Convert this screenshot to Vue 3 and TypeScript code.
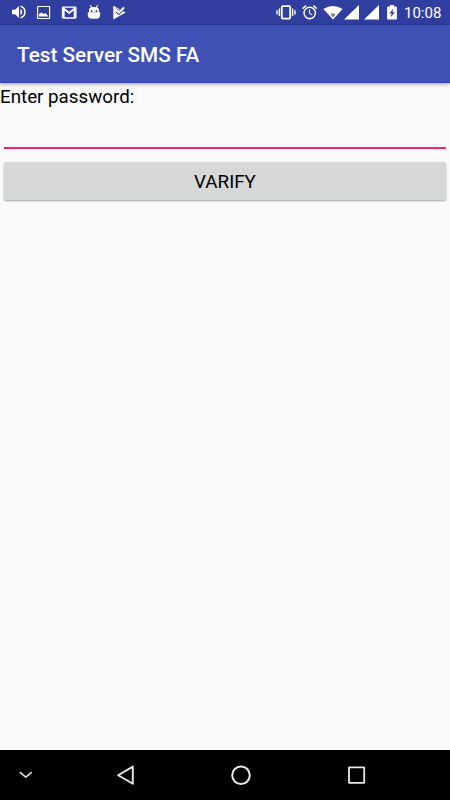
<script setup lang="ts">
import { ref } from 'vue'

const title = 'Test Server SMS FA'
const password = ref('')
const time = '10:08'
</script>

<template>
  <div class="screen">
    <header class="status">
      <div class="group left">
        <!-- volume -->
        <svg width="16" height="16" viewBox="0 0 16 16">
          <path d="M1 5.7h3L8 2v12L4 10.3H1z" fill="#fff" />
          <path d="M9.4 4.9a3.5 3.5 0 0 1 0 6.2z" fill="#fff" />
          <path d="M9.5 2.2a6 6 0 0 1 0 11.6" fill="none" stroke="#fff" stroke-width="1.5" />
        </svg>
        <!-- picture -->
        <svg width="16" height="16" viewBox="0 0 16 16">
          <rect x="1.6" y="2.5" width="12" height="12" rx=".6" fill="none" stroke="#fff" stroke-width="1.2" />
          <path d="M3 12.4V9.9L5.5 8.4l2.2 1.6 1.6-1.1 3.3 3.5z" fill="#fff" />
        </svg>
        <!-- mail -->
        <svg width="16" height="16" viewBox="0 0 16 16">
          <rect x="1.5" y="3.2" width="13.4" height="10.8" rx=".8" fill="none" stroke="#fff" stroke-width="1.3" />
          <path d="M2.7 14V4.4l5.5 4.5 5.5-4.5V14" fill="none" stroke="#fff" stroke-width="1.9" />
        </svg>
        <!-- android bot -->
        <svg width="16" height="16" viewBox="0 0 16 16">
          <path d="M4.2 1.2l1.6 2.4M11.8 1.2l-1.6 2.4" stroke="#fff" stroke-width="1.1" />
          <path d="M3 8V6Q3 2.9 8 2.9T13 6v2z" fill="#fff" />
          <path d="M1.8 8.3h12.4v2.5q0 4-4.2 4H6q-4.2 0-4.2-4z" fill="#fff" />
          <circle cx="5.6" cy="7" r=".9" fill="#303f9f" />
          <circle cx="10.4" cy="7" r=".9" fill="#303f9f" />
        </svg>
        <!-- play check -->
        <svg width="16" height="16" viewBox="0 0 16 16">
          <path d="M2.3 1.7l12.4 6.7-12.4 7z" fill="#fff" />
          <path d="M5 7.7l2.9 2.7 5.2-5.2" fill="none" stroke="#303f9f" stroke-width="1.2" />
          <path d="M5.2 5.8l2.7 2.5 5.2-4.9" fill="none" stroke="#fff" stroke-width="2" />
          <path d="M5.3 4.2l2.6 2.4 1.9-1.8" fill="none" stroke="#303f9f" stroke-width=".9" />
        </svg>
      </div>
      <div class="group right">
        <!-- vibrate -->
        <svg class="vibrate" width="20" height="16" viewBox="0 0 20 16">
          <rect x="5.8" y="2.2" width="8.4" height="12.4" rx="1" fill="none" stroke="#fff" stroke-width="1.8" />
          <path d="M1 6.2v4.2M3.4 4.5v7.6M16.6 4.5v7.6M19 6.2v4.2" stroke="#fff" stroke-width="1.4" />
        </svg>
        <!-- alarm -->
        <svg class="alarm" width="16" height="16" viewBox="0 0 16 16">
          <circle cx="7.7" cy="9" r="5.7" fill="none" stroke="#fff" stroke-width="1.4" />
          <path d="M.6 4.6l3.5-3M14.8 4.6l-3.5-3" stroke="#fff" stroke-width="1.4" />
          <path d="M7.5 5.6v3.7l2.7 1.6" fill="none" stroke="#fff" stroke-width="1.1" />
        </svg>
        <!-- wifi -->
        <svg class="wifi" width="20" height="16" viewBox="0 0 20 16">
          <path d="M.4 5Q10 -1.2 19.6 5L10 15.6z" fill="#fff" />
          <path d="M7.9 9.4h4.2v1.5L10 13.4l-2.1-2.5z" fill="#7e7e86" />
        </svg>
        <!-- signal, one per SIM -->
        <svg class="signal" width="15" height="16" viewBox="0 0 15 16">
          <path d="M0 15.5L15 1v14.5z" fill="#fff" />
        </svg>
        <svg class="signal second" width="15" height="16" viewBox="0 0 15 16">
          <path d="M0 15.5L15 1v14.5z" fill="#fff" />
        </svg>
        <!-- charging battery -->
        <svg class="battery" width="10" height="16" viewBox="0 0 10 16">
          <path d="M3 1h4v1.4h2.2q.7 0 .7.7v11.6q0 .8-.8.8H.9q-.8 0-.8-.8V3.1q0-.7.7-.7H3z" fill="#fff" />
          <path d="M6.5 4.6L2.3 9.5h2.4l-1.2 4 4.4-5.2H5.4z" fill="#303f9f" />
        </svg>
        <span class="time">{{ time }}</span>
      </div>
    </header>

    <div class="appbar">
      <h1>{{ title }}</h1>
    </div>

    <main class="content">
      <label for="password">Enter password:</label>
      <input id="password" v-model="password" type="password" />
      <button type="button">VARIFY</button>
    </main>

    <nav class="navbar">
      <svg class="collapse" width="14" height="8" viewBox="0 0 14 8">
        <path d="M.8 1.2l6 5 6-5" fill="none" stroke="#d8d8d8" stroke-width="1.7" />
      </svg>
      <svg class="back" width="18" height="20" viewBox="0 0 18 20">
        <path d="M1.2 10.2L15.8 1.6v17.2z" fill="none" stroke="#e8e8e8" stroke-width="1.9" stroke-linejoin="round" />
      </svg>
      <svg class="home" width="20" height="20" viewBox="0 0 20 20">
        <circle cx="10" cy="10.2" r="8.8" fill="none" stroke="#e8e8e8" stroke-width="2" />
      </svg>
      <svg class="recent" width="18" height="18" viewBox="0 0 18 18">
        <rect x="1" y="1.4" width="15.2" height="15.4" rx=".3" fill="none" stroke="#e8e8e8" stroke-width="1.8" />
      </svg>
    </nav>
  </div>
</template>

<style>
body {
  margin: 0;
  background: #fafafa;
}
</style>

<style scoped>
.screen {
  width: 450px;
  height: 800px;
  display: flex;
  flex-direction: column;
  overflow: hidden;
  background: #fafafa;
  font-family: Roboto, 'Liberation Sans', sans-serif;
}
svg {
  display: block;
  flex: none;
}
.status {
  height: 25px;
  flex: none;
  display: flex;
  justify-content: space-between;
  background: #303f9f;
  color: #fff;
}
.group {
  display: flex;
  height: 16px;
  padding-top: 4px;
}
.left {
  gap: 9px;
  padding-left: 11px;
}
.alarm {
  margin-left: 6px;
}
.wifi {
  margin-left: 5px;
}
.signal {
  margin-left: 1px;
}
.signal.second {
  margin-left: 5px;
}
.battery {
  margin-left: 8px;
}
.time {
  width: 46px;
  margin-left: 7px;
  font-size: 15px;
  line-height: 18px;
  white-space: nowrap;
}
.appbar {
  height: 58px;
  flex: none;
  display: flex;
  align-items: center;
  box-sizing: border-box;
  padding: 2px 17px 0;
  background: #3f51b5;
  border-bottom: 1px solid #2f43b5;
  box-shadow: 0 1px 4px rgba(0, 0, 0, 0.4);
}
h1 {
  margin: 0;
  color: #fff;
  font-size: 20.75px;
  font-weight: 500;
  line-height: 28px;
}
.content {
  flex: 1;
  display: flex;
  flex-direction: column;
}
label {
  height: 28px;
  color: #000;
  font-size: 18.75px;
  line-height: 28px;
}
input {
  height: 38px;
  margin: 0 4px;
  padding: 0;
  box-sizing: border-box;
  border: 0;
  border-bottom: 2px solid #f0246c;
  background: transparent;
  outline: none;
}
button {
  height: 38px;
  margin: 13px 4px 0;
  padding: 2px 0 0;
  border: 0;
  border-radius: 2px;
  background: #d6d7d7;
  box-shadow: 0 1px 2px rgba(0, 0, 0, 0.35);
  color: #000;
  font-family: inherit;
  font-size: 18.75px;
  line-height: 36px;
}
.navbar {
  height: 50px;
  flex: none;
  display: flex;
  align-items: center;
  background: #000;
}
.collapse {
  margin-left: 19px;
}
.back {
  margin-left: 84px;
}
.home {
  margin-left: 96px;
}
.recent {
  margin-left: 97px;
}
</style>
